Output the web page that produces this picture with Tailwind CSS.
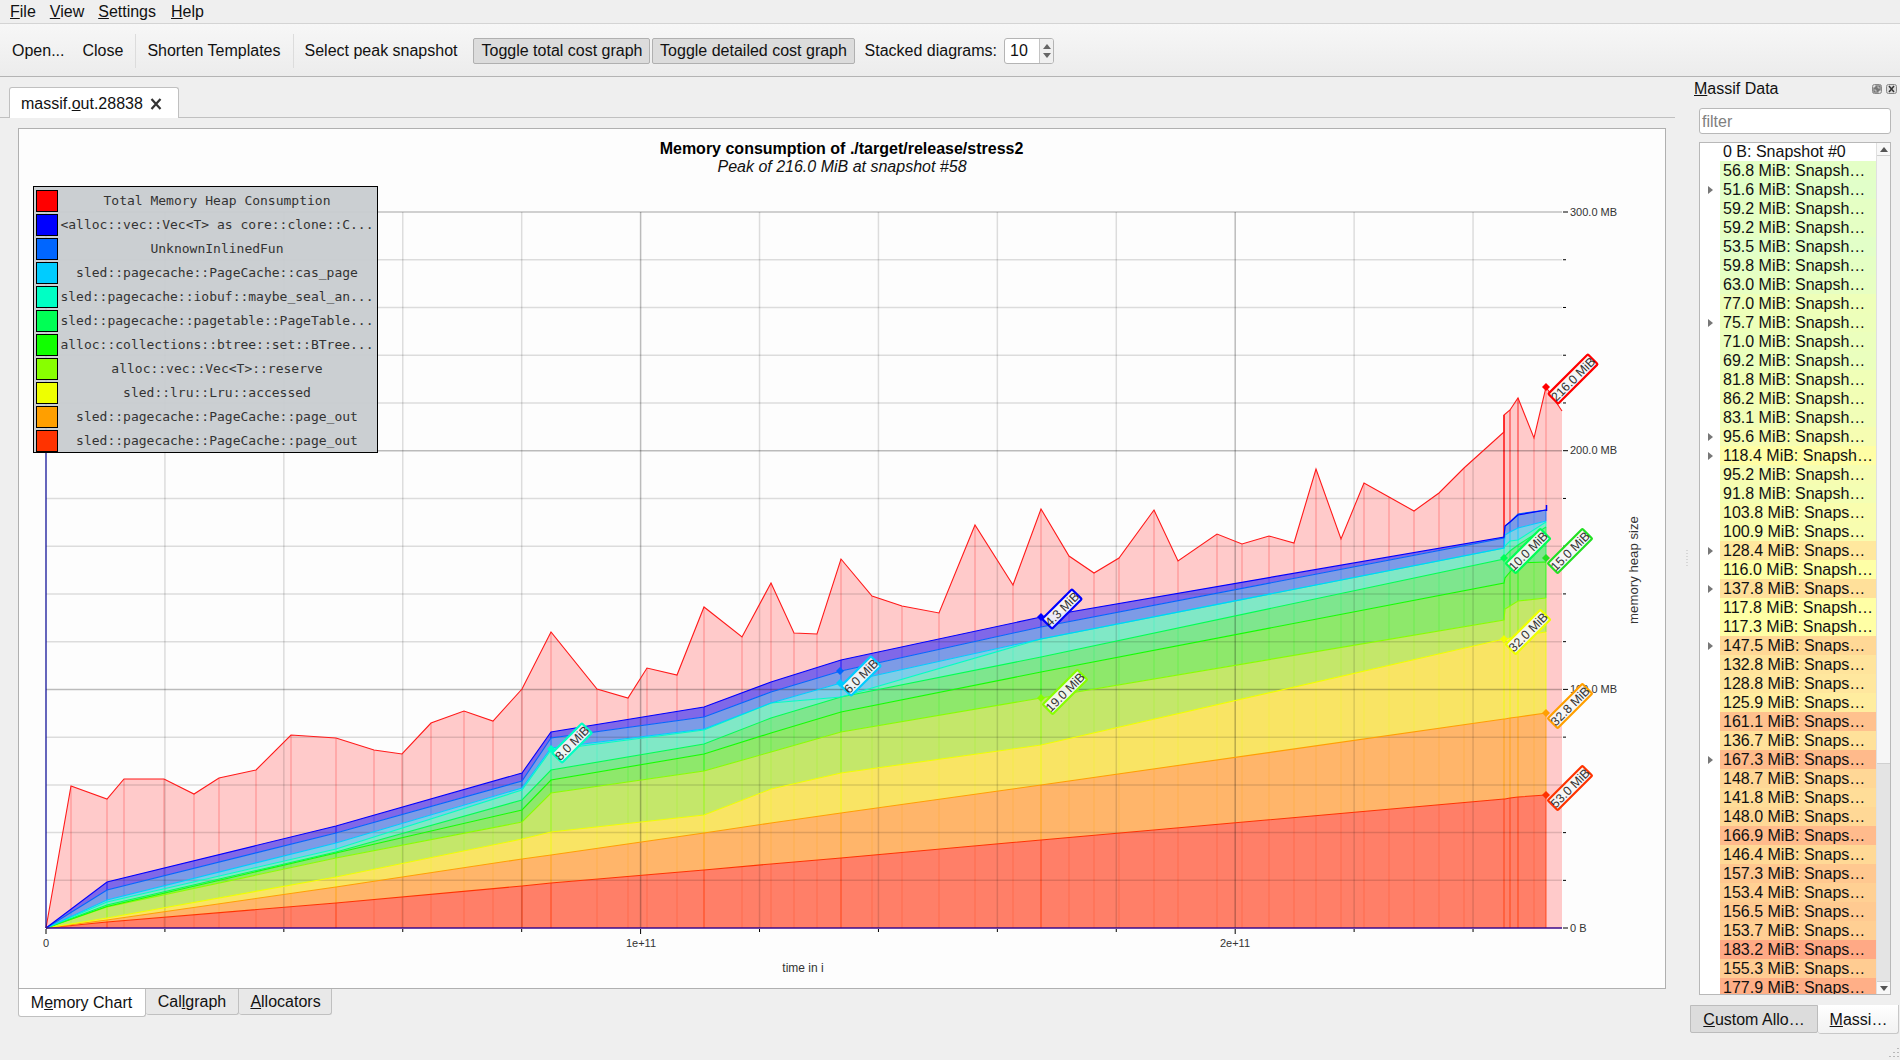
<!DOCTYPE html>
<html lang="en">
<head>
  <meta charset="UTF-8" />
  <title>Massif Visualizer</title>
  <script src="https://cdn.jsdelivr.net/npm/@tailwindcss/browser@4"></script>
</head>
<body class="w-[1900px] h-[1060px] overflow-hidden relative flex flex-col bg-[#efefef] text-[#111] text-[16px] font-['Liberation_Sans',sans-serif]">

  <!-- menu -->
  <div class="h-[24px] shrink-0 flex items-center gap-[14px] pl-[10px] border-b border-[#d4d4d4] leading-[22px]">
    <span><u>F</u>ile</span><span><u>V</u>iew</span><span><u>S</u>ettings</span><span class="ml-[1px]"><u>H</u>elp</span>
  </div>

  <!-- toolbar -->
  <div class="h-[53px] shrink-0 flex items-center pt-[2px] border-b border-[#b4b4b4] bg-gradient-to-b from-[#f7f7f7] to-[#ececec]">
    <span class="ml-[12px]">Open...</span>
    <span class="ml-[18px]">Close</span>
    <div class="ml-[12px] w-px h-[34px] bg-[#dcdcdc]"></div>
    <span class="ml-[11px]">Shorten Templates</span>
    <div class="ml-[12px] w-px h-[34px] bg-[#dcdcdc]"></div>
    <span class="ml-[11px]">Select peak snapshot</span>
    <button class="ml-[15px] h-[26px] w-[177px] pl-[2px] rounded-[2px] border border-[#b0b0b0] bg-[#dcdcdc]">Toggle total cost graph</button>
    <button class="ml-[2px] h-[26px] w-[203px] pl-[1px] rounded-[2px] border border-[#b0b0b0] bg-[#dcdcdc]">Toggle detailed cost graph</button>
    <span class="ml-[10px]">Stacked diagrams:</span>
    <div class="ml-[7px] h-[26px] w-[50px] flex rounded-[3px] border border-[#b4b4b4] bg-white overflow-hidden">
      <span class="flex-1 pl-[5px] leading-[24px]">10</span>
      <div class="w-[14px] border-l border-[#c4c4c4] bg-[#f0f0f0] flex flex-col items-center justify-center gap-[4px]">
        <svg width="8" height="5"><path d="M0 5 L4 0 L8 5 Z" fill="#666"/></svg>
        <svg width="8" height="5"><path d="M0 0 L4 5 L8 0 Z" fill="#666"/></svg>
      </div>
    </div>
  </div>

  <div class="flex-1 flex min-h-0">
    <!-- main area -->
    <div class="w-[1675px] shrink-0 flex flex-col">
      <div class="h-[41px] shrink-0 pt-[10px] pl-[9px] border-b border-[#c0c0c0] flex">
        <div class="h-[31px] w-[170px] flex items-center gap-[7px] pl-[11px] pt-[2px] bg-white border border-b-0 border-[#c0c0c0] rounded-t-[3px]">
          <span>massif.<u>o</u>ut.28838</span>
          <svg width="12" height="12" viewBox="0 0 12 12"><path d="M1.5 1 L10.5 11 M10.5 1 L1.5 11" stroke="#333" stroke-width="2.2"/></svg>
        </div>
      </div>

      <div class="relative ml-[18px] mt-[10px] w-[1648px] h-[861px] shrink-0 border border-[#b0b0b0] bg-[#fdfdfd]">
        <svg id="chart" class="block" width="1646" height="859" viewBox="19 129 1646 859"></svg>

        <!-- legend sits over the chart -->
        <div id="legend" class="absolute left-[14px] top-[57px] w-[345px] h-[267px] border border-black bg-[#c8ccd0]/95 pt-[3px] pl-[2px] flex flex-col font-['DejaVu_Sans_Mono',monospace] text-[13px] text-[#333]"></div>
      </div>

      <div class="flex ml-[18px] items-start">
        <div class="h-[28px] w-[128px] flex items-center justify-center pr-[1px] pt-[1px] bg-white border border-t-0 border-[#c0c0c0] rounded-b-[3px]"><span>M<u>e</u>mory Chart</span></div>
        <div class="h-[26px] w-[93px] flex items-center justify-center bg-[#e8e8e8] border border-t-0 border-l-0 border-[#c0c0c0] rounded-b-[3px]"><span>Cal<u>l</u>graph</span></div>
        <div class="h-[26px] w-[93px] flex items-center justify-center pl-[1px] bg-[#e8e8e8] border border-t-0 border-l-0 border-[#c0c0c0] rounded-b-[3px]"><span><u>A</u>llocators</span></div>
      </div>
    </div>

    <!-- dock -->
    <div class="flex-1 flex flex-col">
      <div class="h-[22px] shrink-0 flex items-center pl-[19px] pr-[3px] pt-[2px] justify-between">
        <span><u>M</u>assif Data</span>
        <div class="flex gap-[4px] items-center">
          <svg width="10" height="10" viewBox="0 0 10 10"><rect x="0.5" y="0.5" width="9" height="9" rx="2" fill="#ddd" stroke="#888"/><rect x="4" y="2" width="4" height="4" fill="none" stroke="#555"/><rect x="2" y="4" width="4" height="4" fill="none" stroke="#555"/></svg>
          <svg width="11" height="10" viewBox="0 0 11 10"><rect x="0.5" y="0.5" width="10" height="9" rx="2" fill="#ddd" stroke="#888"/><path d="M3 2 L8 8 M8 2 L3 8" stroke="#333" stroke-width="1.5"/></svg>
        </div>
      </div>
      <div class="ml-[24px] mt-[9px] w-[192px] h-[26px] shrink-0 rounded-[3px] border border-[#b8b8b8] bg-white pl-[2px] text-[#808080] leading-[26px]">filter</div>
      <div class="ml-[24px] mt-[8px] w-[192px] h-[853px] shrink-0 border border-[#b8b8b8] bg-white flex overflow-hidden">
        <div id="rows" class="flex-1 min-w-0 overflow-hidden"></div>
        <div class="w-[14px] shrink-0 flex flex-col bg-[#e4e4e4] border-l border-[#e0e0e0]">
          <div class="h-[13px] bg-[#f8f8f8] border-b border-[#cfcfcf] flex items-center justify-center"><svg width="8" height="5"><path d="M0 5 L4 0 L8 5 Z" fill="#555"/></svg></div>
          <div class="h-[608px] bg-[#f6f6f6] border-b border-[#d0d0d0]"></div>
          <div class="flex-1"></div>
          <div class="h-[13px] bg-[#f8f8f8] border-t border-[#cfcfcf] flex items-center justify-center"><svg width="8" height="5"><path d="M0 0 L4 5 L8 0 Z" fill="#555"/></svg></div>
        </div>
      </div>
      <div class="mt-[10px] ml-[15px] flex items-start">
        <div class="h-[28px] w-[128px] flex items-center justify-center pt-[1px] bg-[#dcdcdc] border border-[#bcbcbc] rounded-b-[2px]"><span><u>C</u>ustom Allo…</span></div>
        <div class="h-[29px] w-[81px] flex items-center justify-center pt-[2px] pl-[1px] bg-gradient-to-b from-white to-[#f2f2f2] border border-t-0 border-l-0 border-[#c8c8c8] rounded-b-[3px]"><span><u>M</u>assi…</span></div>
      </div>
    </div>
  </div>

  <!-- splitter handle and size grip -->
  <svg class="absolute left-[1686px] top-[550px]" width="2" height="17"><path d="M1 0 V17" stroke="#bdbdbd" stroke-dasharray="1 2"/></svg>
  <svg class="absolute left-[1888px] top-[1047px]" width="12" height="12"><path d="M10 1 V2 M10 5 V6 M6 5 V6 M10 9 V10 M6 9 V10 M2 9 V10" stroke="#b8b8b8" stroke-width="2"/></svg>

  <script>
    const legend = [
      ["#ff0000", "Total Memory Heap Consumption"],
      ["#0000ff", "<alloc::vec::Vec<T> as core::clone::C..."],
      ["#0066ff", "UnknownInlinedFun"],
      ["#00ccff", "sled::pagecache::PageCache::cas_page"],
      ["#00ffc4", "sled::pagecache::iobuf::maybe_seal_an..."],
      ["#00ff55", "sled::pagecache::pagetable::PageTable..."],
      ["#11ff00", "alloc::collections::btree::set::BTree..."],
      ["#88ff00", "alloc::vec::Vec<T>::reserve"],
      ["#eeff00", "sled::lru::Lru::accessed"],
      ["#ff9f00", "sled::pagecache::PageCache::page_out"],
      ["#ff3300", "sled::pagecache::PageCache::page_out"]
    ];
    const esc = s => s.replace(/</g, "&lt;").replace(/>/g, "&gt;");
    document.getElementById("legend").innerHTML = legend.map(([c, name]) =>
      `<div class="h-[24px] shrink-0 flex items-start">
        <div class="w-[22px] h-[22px] shrink-0 border border-black" style="background:${c}"></div>
        <div class="flex-1 pr-[1px] text-center leading-[22px] whitespace-nowrap overflow-hidden">${esc(name)}</div>
      </div>`).join("");

    // snapshot list
    const rows = ["56.8|h","51.6|h|a","59.2|h","59.2|h","53.5|h","59.8|h","63.0|h","77.0|h","75.7|h|a","71.0|h","69.2|h","81.8|h","86.2|h","83.1|h","95.6|h|a",
      "118.4|h|a","95.2|h","91.8|h","103.8|s","100.9|s","128.4|s|a","116.0|h","137.8|s|a","117.8|h","117.3|h","147.5|s|a","132.8|s","128.8|s","125.9|s","161.1|s","136.7|s",
      "167.3|s|a","148.7|s","141.8|s","148.0|s","166.9|s","146.4|s","157.3|s","153.4|s","156.5|s","153.7|s","183.2|s","155.3|s","177.9|s"];
    const stops = [[50,[224,255,202]],[77,[238,255,185]],[100,[248,253,176]],[118,[255,255,165]],[128,[255,232,158]],[150,[255,214,149]],[161,[255,193,142]],[183,[255,169,133]]];
    function heat(v) {
      for (let i = 1; i < stops.length; i++) {
        if (v <= stops[i][0]) {
          const f = (v - stops[i-1][0]) / (stops[i][0] - stops[i-1][0]);
          const c = stops[i-1][1].map((a, k) => Math.round(a + (stops[i][1][k] - a) * f));
          return `rgb(${c.join(",")})`;
        }
      }
      return "rgb(255,169,133)";
    }
    let html = `<div class="h-[18px] pl-[23px] leading-[18px] whitespace-nowrap">0 B: Snapshot #0</div>`;
    rows.forEach(r => {
      const [v, cut, arrow] = r.split("|");
      const label = `${v} MiB: ${cut === "h" ? "Snapsh…" : "Snaps…"}`;
      html += `<div class="h-[19px] flex">
        <div class="w-[20px] shrink-0 flex items-center justify-center bg-white">${arrow ? '<svg width="5" height="8"><path d="M0 0 L5 4 L0 8 Z" fill="#777"/></svg>' : ""}</div>
        <div class="flex-1 pl-[3px] leading-[19px] whitespace-nowrap overflow-hidden" style="background:${heat(parseFloat(v))}">${label}</div>
      </div>`;
    });
    document.getElementById("rows").innerHTML = html;

    // chart data, in page pixels
    const total = [[46,928],[71,786],[107,799],[124,779],[164,779],[194,794],[219,778],[256,770],[291,735],[336,738],[374,750],[402,754],[431,723],[464,711],[493,721],[522,689],[551,632],[597,689],[628,698],[647,668],[677,675],[704,607],[742,637],[771,583],[794,633],[817,634],[841,559],[872,596],[902,606],[939,613],[975,525],[1013,585],[1041,509],[1069,556],[1094,573],[1119,558],[1154,510],[1178,561],[1217,534],[1242,544],[1269,536],[1294,543],[1316,469],[1341,539],[1364,483],[1389,497],[1414,511],[1439,493],[1464,468],[1504,432],[1504,415],[1510,410],[1518,398],[1534,438],[1546,387],[1562,411]];
    const K = [46,107,336,522,551,704,771,841,1041,1504,1505,1510,1518,1546];
    const layers = [
      { line:"#0000ff", fill:"#8068e8", y:[928,882,826,773,732,707,682,660,617,537,526,522,515,510] },
      { line:"#0066ff", fill:"#7d9be6", y:[928,890,833,781,738,717,692,671,627,538,526,522,514,510] },
      { line:"#00ccff", fill:"#7ecde8", y:[928,900,843,788,748,729,703,683,639,548,535,532,528,521] },
      { line:"#00ffc4", fill:"#80e8c6", y:[928,902,849,790,750,730,703,697,639,548,546,541,540,522] },
      { line:"#00ff55", fill:"#7ee68e", y:[928,905,852,800,770,744,718,697,657,559,556,551,545,527] },
      { line:"#11ff00", fill:"#8ee86b", y:[928,906.5,853,810,780,754,733,712,672,583,578,572,563,562] },
      { line:"#88ff00", fill:"#c4e76a", y:[928,907,858,822,793,771,752,732,698,620,609,606,601,598] },
      { line:"#eeff00", fill:"#f9e464", y:[928,918,877,839,832,815,789,773,745,639,639,638,636,632] },
      { line:"#ff9f00", fill:"#ffb56a", y:[928,920,887,859,855,833,823,813,785,719,719,718,717,713] },
      { line:"#ff3300", fill:"#ff7f68", y:[928,922,903,886,883,870,864,858,840,799,799,798,797,795] }
    ];
    const strong = [107,336,522,551,704,841,1041,1504,1510,1518,1546];
    const pts = a => a.map(p => p.join(",")).join(" ");

    function layerY(layer, x) {
      if (x >= 1546) return layer.y[13];
      for (let i = 1; i < K.length; i++) {
        if (x <= K[i]) {
          const f = (x - K[i-1]) / (K[i] - K[i-1]);
          return layer.y[i-1] + (layer.y[i] - layer.y[i-1]) * f;
        }
      }
    }

    let svg = "";
    // total cost, pale fill under everything
    svg += `<polygon points="${pts(total)} 1562,928" fill="#ffcaca"/>`;

    // stacked layers
    layers.forEach((l, i) => {
      const top = K.map((x, k) => [x, l.y[k]]);
      const next = layers[i + 1];
      const bottom = next ? K.map((x, k) => [x, next.y[k]]).reverse() : [[1546,928],[46,928]];
      svg += `<polygon points="${pts(top)} ${pts(bottom)}" fill="${l.fill}"/>`;
    });

    // one vertical per snapshot, coloured per band
    total.slice(1, -1).forEach(([x, yTop]) => {
      const hard = strong.includes(x);
      if (x === 1504 && yTop === 432) return;
      const firstLayer = layerY(layers[0], x);
      const redAlpha = x === 1504 ? 0.9 : (x === 1510 || x === 1518 ? 0.4 : 0.16);
      svg += `<line x1="${x}" x2="${x}" y1="${yTop}" y2="${firstLayer}" stroke="#ff0000" stroke-opacity="${redAlpha}" stroke-width="${x === 1504 ? 1.5 : 2}"/>`;
      layers.forEach((l, i) => {
        const y1 = layerY(l, x);
        const y2 = layers[i + 1] ? layerY(layers[i + 1], x) : 928;
        svg += `<line x1="${x}" x2="${x}" y1="${y1}" y2="${y2}" stroke="${l.line}" stroke-opacity="${hard ? 0.6 : 0.13}" stroke-width="${hard ? 1.3 : 2}"/>`;
      });
    });

    // grid, drawn over the fills so it shows through
    for (let i = 0; i < 15; i++) {
      const y = 212 + i * 47.74;
      const dark = i === 5 || i === 10;
      svg += `<line x1="46" x2="1562" y1="${y}" y2="${y}" stroke="#000" stroke-opacity="${dark ? 0.26 : (i === 0 ? 0.24 : 0.13)}" stroke-width="1.5"/>`;
      svg += `<line x1="1563" x2="${i % 5 === 0 ? 1568 : 1566}" y1="${y}" y2="${y}" stroke="#000" stroke-width="1"/>`;
    }
    for (let i = 0; i < 13; i++) {
      const x = 46 + i * 118.92;
      const dark = i === 5 || i === 10;
      if (i > 0) svg += `<line x1="${x}" x2="${x}" y1="212" y2="928" stroke="#000" stroke-opacity="${dark ? 0.26 : 0.13}" stroke-width="1.5"/>`;
      svg += `<line x1="${x}" x2="${x}" y1="929" y2="${i % 5 === 0 ? 934 : 932}" stroke="#000" stroke-width="1"/>`;
    }
    svg += `<line x1="1563" x2="1568" y1="928" y2="928" stroke="#000"/>`;

    // curve outlines
    layers.slice().reverse().forEach(l => {
      svg += `<polyline points="${pts(K.map((x, k) => [x, l.y[k]]))}" fill="none" stroke="${l.line}" stroke-width="1.1"/>`;
    });
    svg += `<line x1="1546.5" x2="1546.5" y1="505" y2="511" stroke="#0000ff" stroke-width="1.5"/>`;
    svg += `<polyline points="${pts(total)}" fill="none" stroke="#ff1a1a" stroke-width="1.1"/>`;

    // axes
    svg += `<line x1="46" x2="46" y1="212" y2="928" stroke="#000090" stroke-width="1.2"/>`;
    svg += `<line x1="46" x2="1562" y1="928" y2="928" stroke="#3a0a8a" stroke-width="1.3"/>`;

    // axis text
    const txt = (x, y, s, size, extra = "") => `<text x="${x}" y="${y}" font-size="${size}" fill="#333" ${extra}>${s}</text>`;
    [["300.0 MB",212],["200.0 MB",450],["100.0 MB",689],["0 B",928]].forEach(([s, y]) => { svg += txt(1570, y + 4, s, 11); });
    [["0",46],["1e+11",641],["2e+11",1235]].forEach(([s, x]) => { svg += txt(x, 947, s, 11, 'text-anchor="middle"'); });
    svg += txt(803, 972, "time in i", 12, 'text-anchor="middle"');
    svg += txt(0, 0, "memory heap size", 13.2, 'text-anchor="middle" transform="translate(1638 570) rotate(-90)"');

    // title
    svg += `<text x="841.5" y="154" font-size="16" font-weight="700" fill="#000" text-anchor="middle">Memory consumption of ./target/release/stress2</text>`;
    svg += `<text x="842" y="172" font-size="16" font-style="italic" fill="#111" text-anchor="middle">Peak of 216.0 MiB at snapshot #58</text>`;

    // value tags on the curves
    const tags = [
      ["216.0 MiB",1573,379,56,"#ff0000",1546,387],
      ["15.0 MiB",1570,551,49,"#22e022",1546,558],
      ["10.0 MiB",1528,551,49,"#00ff55",1504,558],
      ["32.0 MiB",1528,632,49,"#eeff00",1504,639],
      ["32.8 MiB",1570,706,49,"#ff9f00",1546,713],
      ["53.0 MiB",1570,788,49,"#ff3300",1546,795],
      ["8.0 MiB",572,743,42,"#00ffc4",551,749],
      ["6.0 MiB",861,676,42,"#00ccff",840,683],
      ["4.3 MiB",1062,609,42,"#0000ff",1041,617],
      ["19.0 MiB",1065,692,49,"#88ff00",1041,698]
    ];
    svg += `<path d="M840 667 l4 4 l-4 4 l-4 -4 Z" fill="#0066ff"/>`;
    tags.forEach(([s, cx, cy, w, c, mx, my]) => {
      svg += `<path d="M${mx} ${my - 4} l4 4 l-4 4 l-4 -4 Z" fill="${c}"/>`;
      svg += `<g transform="translate(${cx} ${cy}) rotate(-45)">
        <rect x="${-w / 2}" y="-7" width="${w}" height="14" rx="1" fill="#f6f6f6" fill-opacity="0.92" stroke="${c}" stroke-width="2.2"/>
        <text y="4.5" font-size="12.5" fill="#333" text-anchor="middle">${s}</text>
      </g>`;
    });

    document.getElementById("chart").innerHTML = svg;
  </script>
</body>
</html>
